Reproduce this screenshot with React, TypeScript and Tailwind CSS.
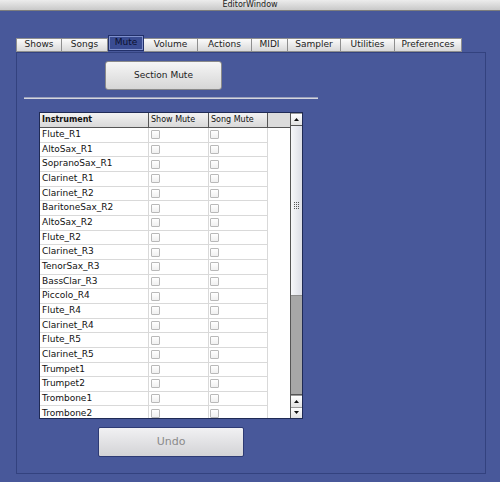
import React from "react";

const tabs = ["Shows", "Songs", "Mute", "Volume", "Actions", "MIDI", "Sampler", "Utilities", "Preferences"];
const tabWidths = [46, 46, 36, 54, 54, 36, 53, 54, 67];

const instruments = [
  "Flute_R1",
  "AltoSax_R1",
  "SopranoSax_R1",
  "Clarinet_R1",
  "Clarinet_R2",
  "BaritoneSax_R2",
  "AltoSax_R2",
  "Flute_R2",
  "Clarinet_R3",
  "TenorSax_R3",
  "BassClar_R3",
  "Piccolo_R4",
  "Flute_R4",
  "Clarinet_R4",
  "Flute_R5",
  "Clarinet_R5",
  "Trumpet1",
  "Trumpet2",
  "Trombone1",
  "Trombone2",
];

function Checkbox() {
  return (
    <div className="w-[9px] h-[9px] rounded-[1px] border border-[#b9b9b9] bg-gradient-to-b from-[#ffffff] to-[#f0f0f0]" />
  );
}

function Arrow({ up }: { up: boolean }) {
  return (
    <div className="flex-1 flex items-center justify-center bg-gradient-to-b from-[#ffffff] to-[#e2e2e2] border-t border-[#9a9a9a]">
      <svg width="5" height="3" viewBox="0 0 5 3">
        {up ? <polygon points="2.5,0 5,3 0,3" fill="#111" /> : <polygon points="0,0 5,0 2.5,3" fill="#111" />}
      </svg>
    </div>
  );
}

export default function App() {
  return (
    <div
      className="w-[500px] h-[482px] bg-[#48589a] flex flex-col overflow-hidden"
      style={{ fontFamily: '"DejaVu Sans", "Liberation Sans", sans-serif' }}
    >
      {/* Title bar */}
      <div className="h-[11px] bg-gradient-to-b from-[#ececec] to-[#c9c9c9] border-b border-[#7d7d7d] flex items-center justify-center text-[8px] leading-none text-[#222]">
        EditorWindow
      </div>

      {/* Tabs */}
      <div className="mt-[24px] ml-[16px] h-[17px] flex items-end">
        {tabs.map((t, i) =>
          t === "Mute" ? (
            <div
              key={t}
              style={{ width: tabWidths[i] }}
              className="h-[16px] mb-[1px] bg-[#3a4c92] border border-[#22306a] outline outline-1 outline-[#7f90cc] -outline-offset-2 flex items-center justify-center text-[9px] text-[#0b1030]"
            >
              {t}
            </div>
          ) : (
            <div
              key={t}
              style={{ width: tabWidths[i] }}
              className="h-[14px] bg-gradient-to-b from-[#fbfbfb] to-[#d9d9d9] border-r border-y border-[#8e8e8e] first:border-l flex items-center justify-center text-[9px] text-[#222]"
            >
              {t}
            </div>
          )
        )}
      </div>

      {/* Panel */}
      <div className="ml-[16px] w-[470px] h-[422px] border border-[#33427f] flex flex-col">
        <div className="mt-[8px] ml-[88px] w-[117px] h-[29px] rounded-[3px] border border-[#8a8a8a] bg-gradient-to-b from-[#f6f6f6] to-[#d6d6d6] flex items-center justify-center text-[9px] text-[#222]">
          Section Mute
        </div>

        <div className="mt-[7px] ml-[7px] w-[294px] h-[2px] bg-[#d4d6de] border-t border-[#9aa0bd]" />

        {/* Table */}
        <div className="mt-[13px] ml-[22px] w-[264px] h-[307px] border border-[#1f2a55] bg-white flex">
          <div className="w-[250px] flex flex-col">
            <div className="h-[15px] shrink-0 grid grid-cols-[109px_60px_59px_22px] bg-gradient-to-b from-[#f2f2f2] to-[#d9d9d9] border-b border-[#555] text-[8px] text-[#111]">
              <div className="pl-[2px] flex items-center font-bold border-r border-[#555]">Instrument</div>
              <div className="pl-[2px] flex items-center border-r border-[#555]">Show Mute</div>
              <div className="pl-[2px] flex items-center border-r border-[#555]">Song Mute</div>
              <div className="bg-[#dcdcdc]" />
            </div>
            <div className="flex-1 overflow-hidden">
              {instruments.map((name) => (
                <div key={name} className="h-[14.67px] grid grid-cols-[109px_60px_59px_22px] text-[9px] text-[#111]">
                  <div className="pl-[2px] flex items-center border-r border-b border-[#d9d9d9] overflow-hidden whitespace-nowrap">
                    {name}
                  </div>
                  <div className="pl-[2px] flex items-center border-r border-b border-[#d9d9d9]">
                    <Checkbox />
                  </div>
                  <div className="pl-[1px] flex items-center border-r border-b border-[#d9d9d9]">
                    <Checkbox />
                  </div>
                  <div />
                </div>
              ))}
            </div>
          </div>

          {/* Scrollbar */}
          <div className="w-[12px] flex flex-col border-l border-[#555]">
            <div className="h-[13px] flex flex-col border-b border-[#555]">
              <Arrow up />
            </div>
            <div className="h-[170px] bg-gradient-to-r from-[#f6f7fa] to-[#dcdee6] border-b border-[#8c8c8c] flex flex-col items-center pt-[76px]">
              <div className="grid grid-cols-3 gap-[1px]">
                {Array.from({ length: 12 }).map((_, i) => (
                  <div key={i} className="w-[1px] h-[1px] bg-[#555]" />
                ))}
              </div>
            </div>
            <div className="flex-1 bg-[#a7a7a7]" />
            <div className="h-[24px] flex flex-col border-t border-[#555]">
              <Arrow up />
              <Arrow up={false} />
            </div>
          </div>
        </div>

        <div className="mt-[8px] ml-[81px] w-[146px] h-[30px] rounded-[2px] border border-[#2d3a74] bg-gradient-to-b from-[#f1f1f3] to-[#d3d3d6] flex items-center justify-center text-[11px] text-[#8a8a8a]">
          Undo
        </div>
      </div>
    </div>
  );
}
